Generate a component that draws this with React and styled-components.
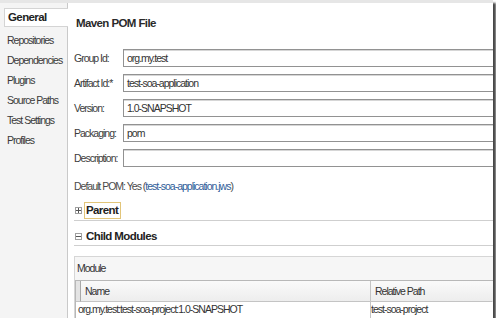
import React from 'react';
import styled, { createGlobalStyle } from 'styled-components';

const GlobalStyle = createGlobalStyle`
  html, body {
    margin: 0;
    padding: 0;
    background: #ffffff;
  }
  body {
    font-family: "Liberation Sans", Arial, sans-serif;
    font-size: 10.5px;
    letter-spacing: -1px;
    color: #333333;
  }
`;

// 전체 창 (오른쪽/아래 그림자)
const Frame = styled.div`
  width: 493px;
  height: 315px;
  display: flex;
  background: #ffffff;
  border-top: 3px solid #e6e6e6;
  box-shadow: 3px 3px 2px rgba(40, 40, 40, 0.85);
`;

// 왼쪽 메뉴
const Sidebar = styled.div`
  width: 67px;
  flex-shrink: 0;
  background: #f4f4f4;
  border-right: 1px solid #c9c9c9;
  padding-top: 5px;
  display: flex;
  flex-direction: column;
`;

const NavItem = styled.div`
  height: ${p => (p.$active ? '17px' : '20px')};
  line-height: ${p => (p.$active ? '17px' : '20px')};
  padding-left: ${p => (p.$active ? '3px' : '7px')};
  margin-left: ${p => (p.$active ? '4px' : '0')};
  margin-right: ${p => (p.$active ? '-1px' : '0')};
  margin-bottom: ${p => (p.$active ? '3px' : '0')};
  background: ${p => (p.$active ? '#ffffff' : 'transparent')};
  border: ${p => (p.$active ? '1px solid #d4d4d4' : 'none')};
  border-right: none;
  font-size: ${p => (p.$active ? '11.5px' : '10.5px')};
  letter-spacing: ${p => (p.$active ? '-0.6px' : '-1px')};
  font-weight: ${p => (p.$active ? 'bold' : 'normal')};
  color: ${p => (p.$active ? '#222' : '#3a3a3a')};
  white-space: nowrap;
`;

// 오른쪽 본문
const Main = styled.div`
  flex: 1;
  display: flex;
  flex-direction: column;
  padding-left: 6px;
  min-width: 0;
`;

const Title = styled.h2`
  margin: 13px 0 0 2px;
  font-size: 11.5px;
  letter-spacing: -0.6px;
  font-weight: bold;
  color: #2a2a2a;
  line-height: 14px;
`;

const Form = styled.div`
  display: grid;
  grid-template-columns: 49px 1fr;
  grid-auto-rows: 18px;
  row-gap: 7px;
  margin-top: 19px;
  align-items: center;
`;

const Label = styled.label`
  color: #3c3c3c;
  white-space: nowrap;
`;

const Input = styled.div`
  height: 16px;
  line-height: 16px;
  border: 1px solid #929292;
  border-right: none;
  box-shadow: inset 0 1px 0 #d6d6d6;
  padding-left: 3px;
  color: #333;
`;

const Info = styled.div`
  margin-top: 12px;
  height: 14px;
  line-height: 14px;
  color: #4a4a4a;
`;

const Link = styled.span`
  color: #2f5d99;
`;

const Section = styled.div`
  display: flex;
  align-items: center;
  gap: 2px;
  padding: ${p => p.$top}px 0 ${p => p.$bottom || 0}px 1px;
  border-bottom: 1px solid #cfcfcf;
`;

const Toggle = styled.span`
  width: 5px;
  height: 5px;
  border: 1px solid #a0a0a0;
  position: relative;
  flex-shrink: 0;
  background: #fff;

  &::before {
    content: '';
    position: absolute;
    left: 0;
    right: 0;
    top: 2px;
    height: 1px;
    background: #555;
  }

  &::after {
    content: '';
    display: ${p => (p.$open ? 'none' : 'block')};
    position: absolute;
    top: 0;
    bottom: 0;
    left: 2px;
    width: 1px;
    background: #555;
  }
`;

const SectionTitle = styled.span`
  font-size: 11.5px;
  letter-spacing: -0.6px;
  font-weight: bold;
  color: #222;
  padding: 0 2px 0 1px;
  border: 1px solid ${p => (p.$focus ? '#e2c579' : 'transparent')};
  line-height: 15px;
`;

const ModulePanel = styled.div`
  flex: 1;
  margin-top: 10px;
  background: #f6f6f6;
  border-top: 1px solid #d6d6d6;
  border-left: 1px solid #d6d6d6;
  display: flex;
  flex-direction: column;
`;

const PanelLabel = styled.div`
  height: 23px;
  line-height: 23px;
  padding-left: 2px;
  color: #333;
`;

const Table = styled.div`
  flex: 1;
  background: #fff;
  border-top: 1px solid #b8b8b8;
  border-left: 1px solid #b8b8b8;
  display: grid;
  grid-template-columns: 5px 290px 1fr;
  grid-template-rows: 21px 1fr;
`;

const Cell = styled.div`
  grid-column: ${p => p.$span || 'auto'};
  border-right: 1px solid ${p => (p.$last ? 'transparent' : '#c4c4c4')};
  border-bottom: ${p => (p.$head ? '1px solid #c4c4c4' : 'none')};
  background: ${p => (p.$head ? 'linear-gradient(#fafafa, #ededed)' : '#fff')};
  padding-left: ${p => p.$pad || 0}px;
  line-height: ${p => (p.$head ? '21px' : '15px')};
  white-space: nowrap;
  overflow: hidden;
  color: #333;
`;

const Corner = styled.div`
  background: #e4e4e4;
  border-right: 1px solid #a8a8a8;
  border-bottom: 1px solid #c4c4c4;
`;

const navItems = ['General', 'Repositories', 'Dependencies', 'Plugins', 'Source Paths', 'Test Settings', 'Profiles'];

const fields = [
  { label: 'Group Id:', value: 'org.my.test' },
  { label: 'Artifact Id:*', value: 'test-soa-application' },
  { label: 'Version:', value: '1.0-SNAPSHOT' },
  { label: 'Packaging:', value: 'pom' },
  { label: 'Description:', value: '' },
];

export default function App() {
  return (
    <>
      <GlobalStyle />
      <Frame>
        <Sidebar>
          {navItems.map((item, i) => (
            <NavItem key={item} $active={i === 0}>{item}</NavItem>
          ))}
        </Sidebar>
        <Main>
          <Title>Maven POM File</Title>
          <Form>
            {fields.map(f => (
              <React.Fragment key={f.label}>
                <Label>{f.label}</Label>
                <Input>{f.value}</Input>
              </React.Fragment>
            ))}
          </Form>
          <Info>
            Default POM: Yes (<Link>test-soa-application.jws</Link>)
          </Info>
          <Section $top={9} $bottom={1}>
            <Toggle />
            <SectionTitle $focus>Parent</SectionTitle>
          </Section>
          <Section $top={7}>
            <Toggle $open />
            <SectionTitle>Child Modules</SectionTitle>
          </Section>
          <ModulePanel>
            <PanelLabel>Module</PanelLabel>
            <Table>
              <Corner />
              <Cell $head $pad={4}>Name</Cell>
              <Cell $head $last $pad={4}>Relative Path</Cell>
              <Cell $span="1 / 3">&nbsp;org.my.test:test-soa-project:1.0-SNAPSHOT</Cell>
              <Cell $last>test-soa-project</Cell>
            </Table>
          </ModulePanel>
        </Main>
      </Frame>
    </>
  );
}
